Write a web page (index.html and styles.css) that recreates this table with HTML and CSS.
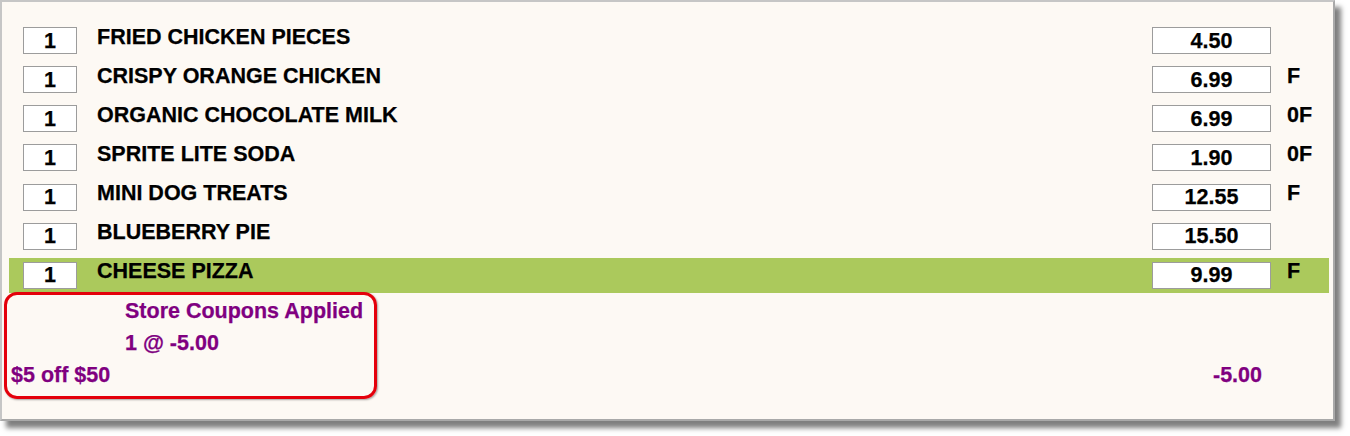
FILE: index.html
```html
<!DOCTYPE html>
<html>
<head>
<meta charset="utf-8">
<link rel="stylesheet" href="styles.css">
</head>
<body>
<div class="panel">
  <div class="rows">
    <div class="row">
      <div class="qty">1</div>
      <div class="name">FRIED CHICKEN PIECES</div>
      <div class="price">4.50</div>
      <div class="flag"></div>
    </div>
    <div class="row">
      <div class="qty">1</div>
      <div class="name">CRISPY ORANGE CHICKEN</div>
      <div class="price">6.99</div>
      <div class="flag">F</div>
    </div>
    <div class="row">
      <div class="qty">1</div>
      <div class="name">ORGANIC CHOCOLATE MILK</div>
      <div class="price">6.99</div>
      <div class="flag">0F</div>
    </div>
    <div class="row">
      <div class="qty">1</div>
      <div class="name">SPRITE LITE SODA</div>
      <div class="price">1.90</div>
      <div class="flag">0F</div>
    </div>
    <div class="row">
      <div class="qty">1</div>
      <div class="name">MINI DOG TREATS</div>
      <div class="price">12.55</div>
      <div class="flag">F</div>
    </div>
    <div class="row">
      <div class="qty">1</div>
      <div class="name">BLUEBERRY PIE</div>
      <div class="price">15.50</div>
      <div class="flag"></div>
    </div>
    <div class="row selected">
      <div class="qty">1</div>
      <div class="name">CHEESE PIZZA</div>
      <div class="price">9.99</div>
      <div class="flag">F</div>
    </div>
  </div>
  <div class="coupons">
    <div class="coupon-box">
      <div class="cline indent">Store Coupons Applied</div>
      <div class="cline indent">1 @ -5.00</div>
      <div class="cline">$5 off $50</div>
    </div>
    <div class="coupon-amount">-5.00</div>
  </div>
</div>
</body>
</html>
```

FILE: styles.css
```css
html, body {
  margin: 0;
  padding: 0;
  background: #ffffff;
}

body {
  height: 436px;
  font-family: "Liberation Sans", Arial, sans-serif;
  font-weight: bold;
  font-size: 21.5px;
  color: #000;
  -webkit-text-stroke: 0.25px currentColor;
}

.panel {
  width: 1335px;
  height: 421px;
  box-sizing: border-box;
  background: #fdf9f4;
  border-style: solid;
  border-width: 2px;
  border-color: #c6c6c6 #a9a9a9 #a9a9a9 #c6c6c6;
  box-shadow: 6px 7px 5px rgba(0, 0, 0, 0.5);
  padding-top: 21px;
  display: flex;
  flex-direction: column;
}

.rows {
  display: flex;
  flex-direction: column;
  gap: 4.17px;
  margin: 0 4px 0 7px;
}

.row {
  height: 35px;
  box-sizing: border-box;
  padding: 4px 0 0 14px;
  display: flex;
  align-items: flex-start;
  line-height: 24px;
}

.row.selected {
  background: #abc95c;
}

.qty, .price {
  height: 27px;
  box-sizing: border-box;
  border: 1px solid #9c9c9c;
  background: #ffffff;
  display: flex;
  align-items: center;
  justify-content: center;
}

.qty {
  width: 54px;
}

.name {
  flex: 1;
  margin-left: 20px;
  margin-top: -2.5px;
}

.price {
  width: 119px;
}

.flag {
  width: 42px;
  margin-left: 16px;
  margin-top: -2.5px;
}

.coupons {
  display: flex;
  margin: -1px 0 0 2px;
}

.coupon-box {
  width: 373px;
  box-sizing: border-box;
  border: 3px solid #e4000b;
  border-radius: 13px;
  padding: 0 0 5px 4px;
  box-shadow: 1px 1px 2px rgba(0, 0, 0, 0.35);
  color: #800080;
}

.cline {
  line-height: 32px;
  white-space: nowrap;
}

.cline.indent {
  margin-left: 114px;
}

.coupon-amount {
  flex: 1;
  align-self: flex-end;
  text-align: right;
  line-height: 32px;
  margin-bottom: 8px;
  padding-right: 71px;
  color: #800080;
}
```
